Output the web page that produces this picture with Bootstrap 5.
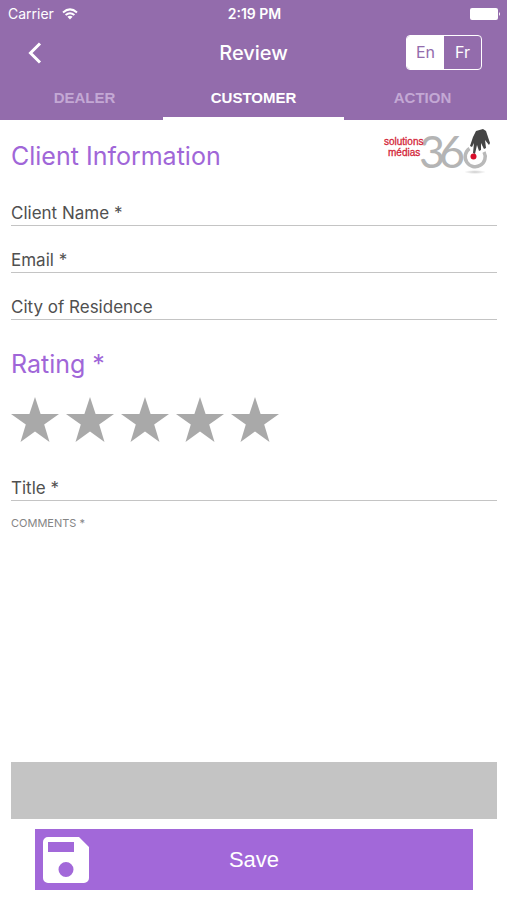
<!DOCTYPE html>
<html lang="en">
<head>
<meta charset="utf-8">
<meta name="viewport" content="width=device-width, initial-scale=1">
<title>Review</title>
<link href="https://cdn.jsdelivr.net/npm/bootstrap@5.3.0/dist/css/bootstrap.min.css" rel="stylesheet">
<style>
body { font-family: Inter, "Liberation Sans", sans-serif; color: #505050; background: #fff; }
.app-head { background: #936cac; color: #fff; }
.status-bar { height: 27px; font-size: 14px; line-height: 27px; padding: 0 6px 0 8px; }
.title-bar { height: 51px; padding: 0 25px; }
.app-title { font-size: 20px; line-height: 24px; font-weight: 500; }
.side { flex: 1 1 0; }
.lang { border: 1px solid #fff; border-radius: 4px; overflow: hidden; }
.lang label { width: 37px; line-height: 33px; font-size: 16px; text-align: center; cursor: pointer; }
.lang input:checked + label { background: #fff; color: #936cac; }
.tab-row { height: 42px; font: bold 15px/40px "Liberation Sans", Arial, sans-serif; }
.tab-row a { color: #c3a8d4; text-decoration: none; text-align: center; flex: 1 1 0; }
.tab-row a.current { color: #fff; position: relative; }
.tab-row a.current::after { content: ""; position: absolute; left: -6px; right: -6px; bottom: -1px; height: 4px; background: #fff; }
.page-body { padding: 3px 10px 0 11px; }
.section-title { font-size: 25px; line-height: 32px; font-weight: 400; color: #a066d8; margin: 0; }
.first-title { padding-top: 17px; }
.field { border-bottom: 1px solid #c4c4c4; height: 47px; padding-bottom: 2px; }
.field label { font-size: 17px; line-height: 20px; }
.field input, .notes { border: 0; background: none; outline: 0; padding: 0; min-width: 0; resize: none; }
.field input { font-size: 17px; line-height: 20px; height: 20px; }
.stars label { cursor: pointer; line-height: 0; }
.stars { gap: 7px; padding: 17px 0 12px; }
.notes-label { font-size: 11px; line-height: 14px; color: #858585; margin-top: 15px; }
.strip { background: #c4c4c4; height: 57px; margin-bottom: 10px; }
.save { background: #a268d9; color: #fff; border: 0; height: 61px; margin: 0 24px 10px; padding: 0 8px; font: 22px/26px "Liberation Sans", Arial, sans-serif; }
</style>
<script src="https://cdn.jsdelivr.net/npm/bootstrap@5.3.0/dist/js/bootstrap.bundle.min.js"></script>
</head>
<body class="min-vh-100 d-flex flex-column">
<header class="app-head">
  <div class="status-bar d-flex align-items-center">
    <div class="side d-flex align-items-center gap-2">
      <span>Carrier</span>
      <svg width="16" height="12" viewBox="0 0 16 12" fill="none" stroke="#fff" stroke-width="2" aria-hidden="true"><path d="M1 4.4Q8-1.6 15 4.4M3.6 7.1Q8 3.4 12.4 7.1"/><path d="M5.4 8.8Q8 6.8 10.6 8.8L8 11.5Z" fill="#fff" stroke="none"/></svg>
    </div>
    <span class="fw-semibold">2:19 PM</span>
    <div class="side d-flex justify-content-end">
      <svg width="31" height="12" viewBox="0 0 31 12" fill="#fff" aria-hidden="true"><rect width="28" height="12" rx="2"/><path d="M29 4q2 2 0 4z"/></svg>
    </div>
  </div>
  <div class="title-bar d-flex align-items-center">
    <div class="side">
      <button type="button" class="btn p-0 border-0 d-block" aria-label="Back"><svg class="d-block" width="20" height="22" viewBox="0 0 20 22" fill="none" stroke="#fff" stroke-width="3"><path d="M15 1.5 5.5 11 15 20.5"/></svg></button>
    </div>
    <h1 class="app-title m-0">Review</h1>
    <div class="side d-flex justify-content-end">
      <div class="lang d-flex" role="radiogroup" aria-label="Language">
        <input class="visually-hidden" type="radio" name="lang" id="en" checked><label for="en">En</label>
        <input class="visually-hidden" type="radio" name="lang" id="fr"><label for="fr">Fr</label>
      </div>
    </div>
  </div>
  <nav class="tab-row d-flex" aria-label="Sections">
    <a href="#dealer">DEALER</a>
    <a href="#customer" class="current" aria-current="page">CUSTOMER</a>
    <a href="#action">ACTION</a>
  </nav>
</header>
<main class="flex-grow-1 d-flex flex-column">
<form class="page-body flex-grow-1 d-flex flex-column">
  <div class="d-flex justify-content-between align-items-start">
    <h2 class="section-title first-title flex-shrink-0">Client Information</h2>
    <svg class="me-1" width="112" height="56" viewBox="380 124 112 56" role="img" aria-label="solutions médias 360">
      <defs><radialGradient id="shade"><stop offset="0" stop-color="#ccc"/><stop offset="1" stop-color="#fff"/></radialGradient></defs>
      <ellipse cx="474" cy="173" rx="11" ry="2" fill="url(#shade)"/>
      <g fill="#b4b4b4" font-family="Lato, sans-serif" font-size="45"><text x="418" y="169">3</text><text x="438" y="169">6</text></g>
      <path d="M468.500 149.500A10 10 0 1 0 483 153" fill="none" stroke="#b9b9b9" stroke-width="3.5"/>
      <g fill="#d3263a" stroke="#d3263a" stroke-width=".3" font-family="'Liberation Sans', sans-serif" font-size="10"><text x="383" y="146">solutions</text><text x="387" y="157">médias</text></g>
      <path d="M475 132 482 130 485 132 489 144 488 146 484 141 485 149 483 150 480 144 480 151 478 152 476 146 474 155 472 154 473 144 471 148 469 147 472 138Z" fill="#454545"/>
      <circle cx="472.500" cy="157.500" r="3" fill="#d8102c"/>
    </svg>
  </div>
  <div class="field d-flex align-items-end gap-2"><label for="name">Client Name *</label><input class="flex-grow-1" id="name" type="text" required></div>
  <div class="field d-flex align-items-end gap-2"><label for="email">Email *</label><input class="flex-grow-1" id="email" type="email" required></div>
  <div class="field d-flex align-items-end gap-2"><label for="city">City of Residence</label><input class="flex-grow-1" id="city" type="text"></div>
  <h2 class="section-title pt-4 mt-1">Rating *</h2>
  <svg class="d-none" aria-hidden="true"><symbol id="star" viewBox="0 0 48 45"><path d="M24 0 29.600 17H48L33.200 27.500 38.500 45 24 34.500 9.500 45 14.800 27.500 0 17H18.400Z" fill="#a9a9a9"/></symbol></svg>
  <div class="stars d-flex" role="radiogroup" aria-label="Rating">
    <input class="visually-hidden" type="radio" name="rating" id="r1"><label for="r1" aria-label="1 star"><svg width="48" height="45"><use href="#star"/></svg></label>
    <input class="visually-hidden" type="radio" name="rating" id="r2"><label for="r2" aria-label="2 stars"><svg width="48" height="45"><use href="#star"/></svg></label>
    <input class="visually-hidden" type="radio" name="rating" id="r3"><label for="r3" aria-label="3 stars"><svg width="48" height="45"><use href="#star"/></svg></label>
    <input class="visually-hidden" type="radio" name="rating" id="r4"><label for="r4" aria-label="4 stars"><svg width="48" height="45"><use href="#star"/></svg></label>
    <input class="visually-hidden" type="radio" name="rating" id="r5"><label for="r5" aria-label="5 stars"><svg width="48" height="45"><use href="#star"/></svg></label>
  </div>
  <div class="field d-flex align-items-end gap-2"><label for="subject">Title *</label><input class="flex-grow-1" id="subject" type="text" required></div>
  <label class="notes-label" for="comments">COMMENTS *</label>
  <textarea class="notes flex-grow-1" id="comments" required></textarea>
  <div class="strip"></div>
  <button type="submit" class="save d-flex align-items-center">
    <span class="side d-flex"><svg width="46" height="46" viewBox="0 0 46 46" aria-hidden="true"><path fill="#fff" fill-rule="evenodd" d="M5 0H36L46 10V41a5 5 0 0 1-5 5H5a5 5 0 0 1-5-5V5a5 5 0 0 1 5-5ZM5 5V15H31V5ZM23 25a7.500 7.500 0 1 0 0 15 7.500 7.500 0 0 0 0-15Z"/></svg></span>
    <span>Save</span>
    <span class="side"></span>
  </button>
</form>
</main>
</body>
</html>
